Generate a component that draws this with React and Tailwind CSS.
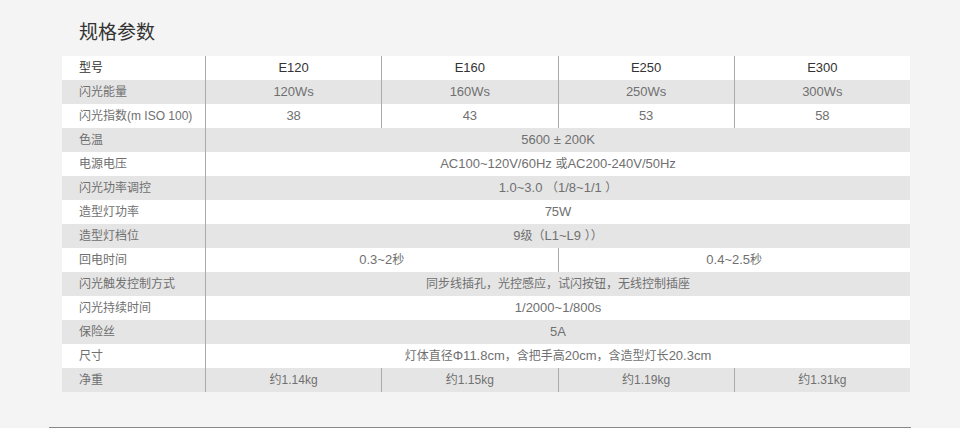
import React from "react";

const rows = [
  ["型号", ["E120", "E160", "E250", "E300"]],
  ["闪光能量", ["120Ws", "160Ws", "250Ws", "300Ws"]],
  ["闪光指数(m ISO 100)", ["38", "43", "53", "58"]],
  ["色温", ["5600 ± 200K"]],
  ["电源电压", ["AC100~120V/60Hz 或AC200-240V/50Hz"]],
  ["闪光功率调控", ["1.0~3.0 （1/8~1/1 ）"]],
  ["造型灯功率", ["75W"]],
  ["造型灯档位", ["9级（L1~L9 ））"]],
  ["回电时间", ["0.3~2秒", "0.4~2.5秒"]],
  ["闪光触发控制方式", ["同步线插孔，光控感应，试闪按钮，无线控制插座"]],
  ["闪光持续时间", ["1/2000~1/800s"]],
  ["保险丝", ["5A"]],
  ["尺寸", ["灯体直径Φ11.8cm，含把手高20cm，含造型灯长20.3cm"]],
  ["净重", ["约1.14kg", "约1.15kg", "约1.19kg", "约1.31kg"]],
];

function Mixed({ text }) {
  const parts = text.split(/([\u3000-\u303f\u4e00-\u9fff\uff00-\uffef]+)/);
  return (
    <>
      {parts.map((p, k) =>
        /[\u3000-\u303f\u4e00-\u9fff\uff00-\uffef]/.test(p) ? (
          <span key={k} className="text-[12px]">
            {p}
          </span>
        ) : (
          <span key={k}>{p}</span>
        )
      )}
    </>
  );
}

export default function App() {
  return (
    <div
      className="w-[960px] h-[428px] bg-[#f4f4f4] relative overflow-hidden"
      style={{ fontFamily: '"Liberation Sans", "Noto Sans CJK SC", sans-serif' }}
    >
      <div className="pl-[79px] pt-[19px] h-[56px] text-[19px] leading-[28px] text-[#333]">
        规格参数
      </div>
      <div className="ml-[62px] w-[848px] flex flex-col">
        {rows.map(([label, cells], i) => {
          const header = i === 0;
          const last = i === rows.length - 1;
          const bg = i % 2 === 0 ? "bg-white" : "bg-[#e5e5e5]";
          const color = header ? "text-[#333]" : "text-[#707070]";
          return (
            <div key={i} className={`flex h-[24px] ${bg} ${color} leading-[24px]`}>
              <div className="w-[144px] shrink-0 pl-[17px] border-r border-[#aaa] whitespace-nowrap text-[12px]">
                {label}
              </div>
              {cells.map((c, j) => (
                <div
                  key={j}
                  className={`flex-1 text-center whitespace-nowrap ${last ? "text-[12px]" : "text-[13px]"} ${
                    j > 0 ? "border-l border-[#aaa]" : ""
                  }`}
                >
                  <Mixed text={c} />
                </div>
              ))}
            </div>
          );
        })}
      </div>
      <div className="absolute left-[49px] top-[427px] w-[862px] h-px bg-[#888]" />
    </div>
  );
}
